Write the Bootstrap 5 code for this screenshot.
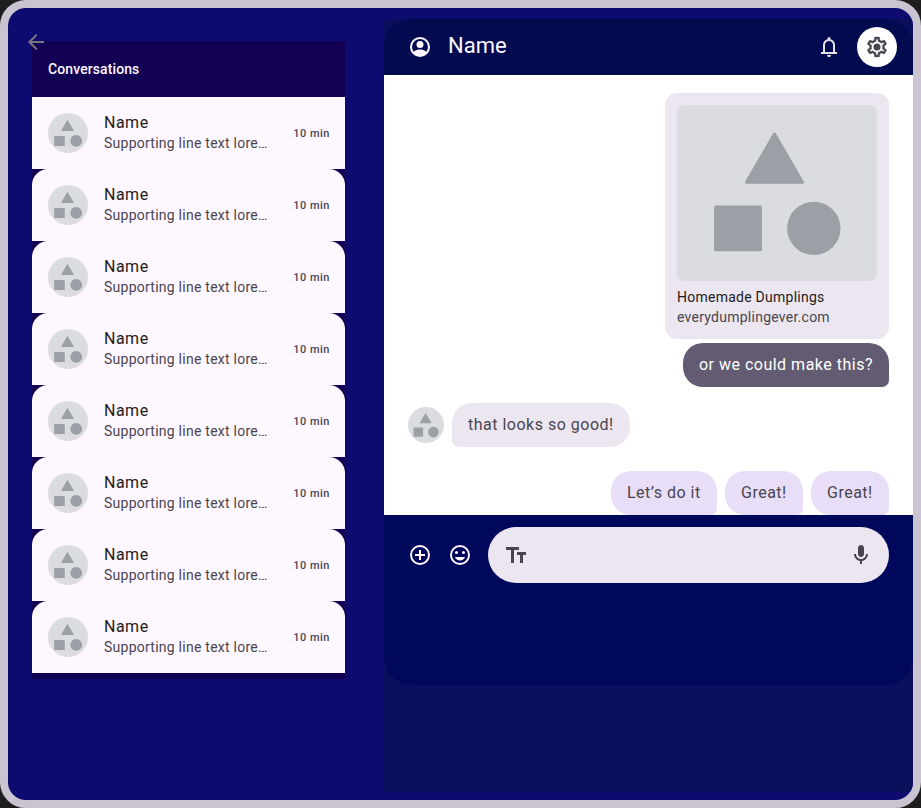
<!DOCTYPE html>
<html lang="en">
<head>
<meta charset="utf-8">
<meta name="viewport" content="width=device-width, initial-scale=1">
<title>Conversations</title>
<link href="https://cdn.jsdelivr.net/npm/bootstrap@5.3.0/dist/css/bootstrap.min.css" rel="stylesheet">
<style>
body{background:#1e1e1e;font-family:Roboto,"Liberation Sans",sans-serif;color:#1d1b20}
.device{width:921px;height:808px;border:8px solid #cac4d0;border-radius:26px;background:#0d0a70}
svg{display:block;flex:none}
.back-btn{left:16px;top:22px;color:#79747e;z-index:2}
.side-pane{width:376px;padding:33px 39px 0 24px}
.conv-panel{background:#120053;height:638px}
.conv-title{height:56px;font-size:14px;line-height:20px;font-weight:500;letter-spacing:.1px;color:#fef7ff}
.conv-row{height:72px;background:#fef7ff;border-radius:16px 16px 0 0}
.conv-row:first-child{border-radius:0}
.conv-name{font-size:16px;line-height:20px;letter-spacing:.5px}
.conv-text{font-size:14px;line-height:20px;letter-spacing:.25px;color:#49454f}
.conv-time{font-size:11px;line-height:16px;font-weight:500;letter-spacing:.5px;color:#49454f;padding-top:2px;margin-right:-1px}
.main-pane{margin-top:11px;height:773px;background:#090e5d}
.chat{height:666px;border-radius:28px;background:#00085b}
.chat-head{height:56px;background:#020b50;color:#fef7ff;padding:0 16px 0 24px}
.chat-name{font-size:22px;line-height:28px;font-weight:400;padding-bottom:2px}
.gear-btn{width:40px;height:40px;background:#fff;color:#49454f}
.chat-body{height:440px;padding:18px 24px 0}
.link-card{width:224px;height:246px;padding:12px;border-radius:12px;background:#ece6f0}
.link-title{font-size:14px;line-height:20px;letter-spacing:.25px;margin-top:6px}
.bubble{height:44px;padding:10px 16px;font-size:16px;line-height:24px;letter-spacing:.5px;color:#49454f;border-radius:20px 20px 7px 20px}
.bubble-sent{background:#625b71;color:#fff}
.bubble-got{background:#ece6f0;border-radius:20px 20px 20px 7px}
.bubble-hint{background:#e8def8;width:78px;white-space:nowrap}
.bubble-long{width:106px}
.composer{padding:12px 24px;color:#fef7ff}
.input-pill{height:56px;background:#ece6f0;color:#49454f;padding:0 16px}
</style>
</head>
<body>
<svg width="0" height="0" class="position-absolute" aria-hidden="true">
<symbol id="avatar" viewBox="0 0 40 40"><circle cx="20" cy="20" r="20" fill="#dadce0"/><path d="M19.5 6.7 26.2 18H12.9zM6.2 22.9h10.6v10.2H6.2z" fill="#9aa0a6"/><circle cx="28.2" cy="27.9" r="5.9" fill="#9aa0a6"/></symbol>
</svg>
<div class="device position-relative overflow-hidden d-flex">
  <div class="back-btn position-absolute"><svg width="24" height="24" viewBox="0 0 24 24" fill="currentColor"><path d="M20 11H7.83l5.59-5.59L12 4l-8 8 8 8 1.41-1.41L7.83 13H20z"/></svg></div>
  <aside class="side-pane flex-shrink-0">
    <div class="conv-panel">
      <div class="conv-title d-flex align-items-center px-3">Conversations</div>
      <div id="rows">
        <div class="conv-row d-flex align-items-center px-3 gap-3">
          <svg width="40" height="40"><use href="#avatar"/></svg>
          <div class="flex-grow-1"><div class="conv-name">Name</div><div class="conv-text text-nowrap">Supporting line text lore…</div></div>
          <div class="conv-time text-nowrap">10 min</div>
        </div>
      </div>
    </div>
  </aside>
  <main class="main-pane flex-grow-1">
    <div class="chat overflow-hidden">
      <header class="chat-head d-flex align-items-center">
        <svg width="24" height="24" viewBox="0 0 24 24" fill="currentColor"><path fill-rule="evenodd" d="M12 2a10 10 0 1 0 0 20 10 10 0 0 0 0-20zM18.36 16.83C16.93 15.09 13.46 14.5 12 14.5s-4.93.59-6.36 2.33A8 8 0 1 1 18.36 16.83zM12 6a3.5 3.5 0 1 0 0 7 3.5 3.5 0 0 0 0-7z"/></svg>
        <div class="chat-name flex-grow-1 ms-3">Name</div>
        <svg class="me-3" width="24" height="24" viewBox="0 0 24 24" fill="#e6e0e9"><path fill-rule="evenodd" d="M4 19v-2h2v-7q0-2.075 1.25-3.688T10.5 4.2v-.7q0-.625.438-1.062T12 2t1.063.438.437 1.062v.7q2 .5 3.25 2.112T18 10v7h2v2zm8 3q-.825 0-1.412-.587T10 20h4q0 .825-.587 1.413T12 22m-4-5h8v-7q0-1.65-1.175-2.825T12 6 9.175 7.175 8 10z"/></svg>
        <div class="gear-btn rounded-circle d-flex align-items-center justify-content-center"><svg width="24" height="24" viewBox="0 0 24 24" fill="currentColor"><path stroke="currentColor" stroke-width=".3" d="M19.43 12.98c.04-.32.07-.64.07-.98 0-.34-.03-.66-.07-.98l2.11-1.65c.19-.15.24-.42.12-.64l-2-3.46c-.09-.16-.26-.25-.44-.25-.06 0-.12.01-.17.03l-2.49 1c-.52-.4-1.08-.73-1.69-.98l-.38-2.65C14.46 2.18 14.25 2 14 2h-4c-.25 0-.46.18-.49.42l-.38 2.65c-.61.25-1.17.59-1.69.98l-2.49-1c-.06-.02-.12-.03-.18-.03-.17 0-.34.09-.43.25l-2 3.46c-.13.22-.07.49.12.64l2.11 1.65c-.04.32-.07.65-.07.98 0 .33.03.66.07.98l-2.11 1.65c-.19.15-.24.42-.12.64l2 3.46c.09.16.26.25.44.25.06 0 .12-.01.17-.03l2.49-1c.52.4 1.08.73 1.69.98l.38 2.65c.03.24.24.42.49.42h4c.25 0 .46-.18.49-.42l.38-2.65c.61-.25 1.17-.59 1.69-.98l2.49 1c.06.02.12.03.18.03.17 0 .34-.09.43-.25l2-3.46c.12-.22.07-.49-.12-.64zm-1.98-1.71c.04.31.05.52.05.73 0 .21-.02.43-.05.73l-.14 1.13.89.7 1.08.84-.7 1.21-1.27-.51-1.04-.42-.9.68c-.43.32-.84.56-1.25.73l-1.06.43-.16 1.13-.2 1.35h-1.4l-.19-1.35-.16-1.13-1.06-.43c-.43-.18-.83-.41-1.23-.71l-.91-.7-1.06.43-1.27.51-.7-1.21 1.08-.84.89-.7-.14-1.13c-.03-.31-.05-.54-.05-.74s.02-.43.05-.73l.14-1.13-.89-.7-1.08-.84.7-1.21 1.27.51 1.04.42.9-.68c.43-.32.84-.56 1.25-.73l1.06-.43.16-1.13.2-1.35h1.39l.19 1.35.16 1.13 1.06.43c.43.18.83.41 1.23.71l.91.7 1.06-.43 1.27-.51.7 1.21-1.07.85-.89.7z"/><circle cx="12" cy="12" r="3.5"/></svg></div>
      </header>
      <section class="chat-body bg-white d-flex flex-column align-items-end">
        <div class="link-card">
          <svg width="200" height="176" viewBox="0 0 200 176"><rect width="200" height="176" rx="8" fill="#dadce0"/><g fill="#9aa0a6" stroke="#9aa0a6" stroke-linejoin="round" stroke-width="3"><path d="M97.5 29 125.5 77.3h-56zM38.6 101.9h44.8v42.8H38.6z"/></g><circle cx="136.8" cy="123.4" r="26.7" fill="#9aa0a6"/></svg>
          <div class="link-title">Homemade Dumplings</div>
          <div class="conv-text">everydumplingever.com</div>
        </div>
        <div class="bubble bubble-sent mt-1">or we could make this?</div>
        <div class="d-flex align-items-center align-self-start gap-2 mt-3">
          <svg width="36" height="36"><use href="#avatar"/></svg>
          <div class="bubble bubble-got">that looks so good!</div>
        </div>
        <div class="d-flex gap-2 mt-4">
          <div class="bubble bubble-hint bubble-long">Let’s do it</div>
          <div class="bubble bubble-hint">Great!</div>
          <div class="bubble bubble-hint">Great!</div>
        </div>
      </section>
      <footer class="composer d-flex align-items-center gap-3">
        <svg width="24" height="24" viewBox="0 0 24 24" fill="currentColor"><path d="M13 7h-2v4H7v2h4v4h2v-4h4v-2h-4zm-1-5a10 10 0 1 0 0 20 10 10 0 0 0 0-20zm0 18a8 8 0 1 1 0-16 8 8 0 0 1 0 16z"/></svg>
        <svg width="24" height="24" viewBox="0 0 24 24"><circle cx="12" cy="12" r="9" fill="none" stroke="currentColor" stroke-width="2"/><g fill="currentColor"><circle cx="8.5" cy="9.5" r="1.5"/><circle cx="15.5" cy="9.5" r="1.5"/><path d="M6.9 14h10.2a5.5 5.5 0 0 1-10.2 0z"/></g></svg>
        <div class="input-pill rounded-pill flex-grow-1 d-flex align-items-center justify-content-between">
          <svg width="24" height="24" viewBox="0 0 24 24" fill="currentColor"><path d="M2 4v3h5v13h3V7h5V4zm20 5h-9v3h3v8h3v-8h3z"/></svg>
          <svg width="24" height="24" viewBox="0 0 24 24" fill="currentColor"><path d="M12 14c1.66 0 3-1.34 3-3V5c0-1.66-1.34-3-3-3S9 3.34 9 5v6c0 1.66 1.34 3 3 3zm5-3c0 2.76-2.24 5-5 5s-5-2.24-5-5H5c0 3.53 2.61 6.43 6 6.92V21h2v-3.08c3.39-.49 6-3.39 6-6.92z"/></svg>
        </div>
      </footer>
    </div>
  </main>
</div>
<script src="https://cdn.jsdelivr.net/npm/bootstrap@5.3.0/dist/js/bootstrap.bundle.min.js"></script>
<script>
// The list shows eight conversations built from the first row.
const rows = document.getElementById('rows');
const first = rows.firstElementChild;
for (let i = 1; i < 8; i++) rows.append(first.cloneNode(true));
</script>
</body>
</html>
